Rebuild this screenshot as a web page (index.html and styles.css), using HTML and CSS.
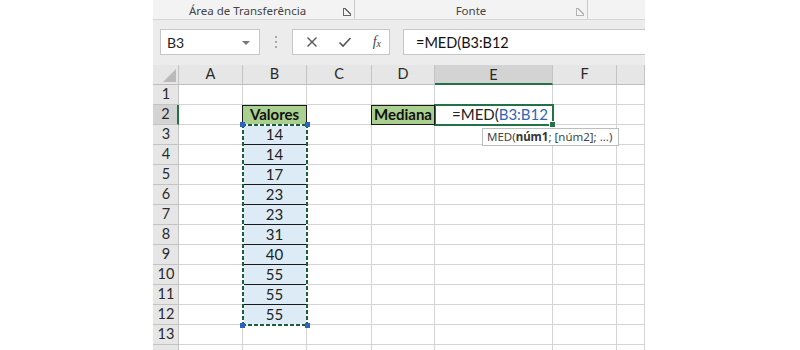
FILE: index.html
```html
<!DOCTYPE html>
<html lang="pt">
<head>
<meta charset="utf-8">
<title>MED</title>
<link rel="stylesheet" href="styles.css">
</head>
<body>
<div class="app">
  <div class="ribbon">
    <div class="group g1"><span class="glabel">Área de Transferência</span><span class="launcher"></span></div>
    <div class="group g2"><span class="glabel">Fonte</span><span class="launcher dim"></span></div>
    <div class="group g3"></div>
  </div>
  <div class="fbar">
    <div class="namebox"><span>B3</span><span class="caret"></span></div>
    <div class="vdots"><i></i><i></i><i></i></div>
    <div class="btns">
      <svg class="ico" width="12" height="12" viewBox="0 0 12 12"><path d="M1.5 1.5 L10.5 10.5 M10.5 1.5 L1.5 10.5" stroke="#555" stroke-width="1.4" fill="none"/></svg>
      <svg class="ico" width="14" height="12" viewBox="0 0 14 12"><path d="M1.5 6.5 L5 10 L12.5 2" stroke="#555" stroke-width="1.6" fill="none"/></svg>
      <span class="fx">f<sub>x</sub></span>
    </div>
    <div class="finput">=MED(B3:B12</div>
  </div>
  <div class="sheet">
    <div class="c h corner"><span class="tri"></span></div>
    <div class="c h">A</div><div class="c h">B</div><div class="c h">C</div><div class="c h">D</div><div class="c h hsel">E</div><div class="c h">F</div><div class="c h"></div>

    <div class="c rh">1</div><div class="c"></div><div class="c"></div><div class="c"></div><div class="c"></div><div class="c"></div><div class="c"></div><div class="c"></div>

    <div class="c rh rsel">2</div><div class="c"></div><div class="c green">Valores</div><div class="c"></div><div class="c green">Mediana</div><div class="c active"><span class="ftext">=MED(<span class="ref">B3:B12</span></span><span class="fill"></span></div><div class="c"></div><div class="c"></div>

    <div class="c rh">3</div><div class="c"></div><div class="c v">14</div><div class="c"></div><div class="c"></div><div class="c"></div><div class="c"></div><div class="c"></div>
    <div class="c rh">4</div><div class="c"></div><div class="c v">14</div><div class="c"></div><div class="c"></div><div class="c"></div><div class="c"></div><div class="c"></div>
    <div class="c rh">5</div><div class="c"></div><div class="c v">17</div><div class="c"></div><div class="c"></div><div class="c"></div><div class="c"></div><div class="c"></div>
    <div class="c rh">6</div><div class="c"></div><div class="c v">23</div><div class="c"></div><div class="c"></div><div class="c"></div><div class="c"></div><div class="c"></div>
    <div class="c rh">7</div><div class="c"></div><div class="c v">23</div><div class="c"></div><div class="c"></div><div class="c"></div><div class="c"></div><div class="c"></div>
    <div class="c rh">8</div><div class="c"></div><div class="c v">31</div><div class="c"></div><div class="c"></div><div class="c"></div><div class="c"></div><div class="c"></div>
    <div class="c rh">9</div><div class="c"></div><div class="c v">40</div><div class="c"></div><div class="c"></div><div class="c"></div><div class="c"></div><div class="c"></div>
    <div class="c rh">10</div><div class="c"></div><div class="c v">55</div><div class="c"></div><div class="c"></div><div class="c"></div><div class="c"></div><div class="c"></div>
    <div class="c rh">11</div><div class="c"></div><div class="c v">55</div><div class="c"></div><div class="c"></div><div class="c"></div><div class="c"></div><div class="c"></div>
    <div class="c rh">12</div><div class="c"></div><div class="c v">55</div><div class="c"></div><div class="c"></div><div class="c"></div><div class="c"></div><div class="c"></div>
    <div class="c rh">13</div><div class="c"></div><div class="c"></div><div class="c"></div><div class="c"></div><div class="c"></div><div class="c"></div><div class="c"></div>
    <div class="c rh"></div><div class="c"></div><div class="c"></div><div class="c"></div><div class="c"></div><div class="c"></div><div class="c"></div><div class="c"></div>

    <div class="marquee"><span class="hd tl"></span><span class="hd tr"></span><span class="hd bl"></span><span class="hd br"></span></div>
    <div class="tip">MED(<b>núm1</b>; [núm2]; ...)</div>
  </div>
</div>
</body>
</html>
```

FILE: styles.css
```css
* { box-sizing: border-box; }
html, body { margin: 0; padding: 0; background: #fff; }
body { width: 800px; height: 350px; overflow: hidden; }

.app {
  margin-left: 153px;
  width: 492px;
  height: 350px;
  overflow: hidden;
  background: #e9e9e9;
  font-family: Lato, "Liberation Sans", sans-serif;
}

/* ribbon */
.ribbon {
  display: flex;
  height: 20px;
  background: #f3f3f3;
  border-bottom: 1px solid #d6d6d6;
  font-family: "Noto Sans", "Open Sans", sans-serif;
  font-size: 11.5px;
  color: #444;
}
.group {
  position: relative;
  display: flex;
  align-items: flex-end;
  justify-content: center;
  height: 19px;
  border-right: 1px solid #c9c9c9;
}
.g1 { width: 202px; padding-right: 12px; }
.g2 { width: 233px; }
.g3 { flex: 1; border-right: none; }
.glabel { line-height: 16px; padding-bottom: 0; }
.launcher {
  position: absolute;
  right: 3px;
  top: 8px;
  width: 8px;
  height: 8px;
  border-left: 1px solid #666;
  border-bottom: 1px solid #666;
  background: linear-gradient(45deg, transparent 45%, #666 45%, #666 58%, transparent 58%);
}
.launcher.dim { opacity: .45; }

/* formula bar */
.fbar {
  display: flex;
  align-items: stretch;
  height: 45px;
  padding: 9px 0 10px 7px;
  background: #ececec;
}
.namebox {
  position: relative;
  width: 100px;
  background: #fff;
  border: 1px solid #c6c6c6;
  font-size: 14px;
  color: #222;
  padding-left: 6px;
  display: flex;
  align-items: center;
}
.caret {
  position: absolute;
  right: 9px;
  top: 11px;
  width: 0;
  height: 0;
  border-left: 4px solid transparent;
  border-right: 4px solid transparent;
  border-top: 4px solid #777;
}
.vdots {
  width: 32px;
  display: flex;
  flex-direction: column;
  align-items: center;
  justify-content: center;
  gap: 3px;
}
.vdots i { width: 2px; height: 2px; background: #a8a8a8; display: block; }
.btns {
  width: 98px;
  background: #fff;
  border: 1px solid #c6c6c6;
  display: flex;
  align-items: center;
  justify-content: space-between;
  padding: 0 8px 0 13px;
}
.fx {
  font-family: "Liberation Serif", "DejaVu Serif", serif;
  font-style: italic;
  font-size: 14px;
  color: #444;
  line-height: 1;
}
.fx sub { font-size: 10px; vertical-align: -1px; }
.finput {
  flex: 1;
  margin-left: 13px;
  background: #fff;
  border: 1px solid #c6c6c6;
  border-right: none;
  font-size: 14.5px;
  color: #111;
  padding-left: 12px;
  display: flex;
  align-items: center;
}

/* sheet */
.sheet {
  position: relative;
  display: grid;
  grid-template-columns: 26px 64px 64px 65px 63px 118px 64px 28px;
  grid-auto-rows: 20px;
  background: #fff;
  font-size: 15px;
  color: #222;
}
.c {
  border-right: 1px solid #d4d4d4;
  border-bottom: 1px solid #d4d4d4;
  display: flex;
  align-items: center;
  justify-content: center;
  white-space: nowrap;
  line-height: 1;
}
.h, .rh {
  background: #e6e6e6;
  color: #2a2a2a;
  border-color: #c3c3c3;
  font-size: 14.5px;
}
.h { border-bottom-color: #bdbdbd; }
.rh { justify-content: center; padding-left: 1px; }
.corner { position: relative; }
.tri {
  position: absolute;
  right: 2px;
  bottom: 2px;
  width: 13px;
  height: 13px;
  background: #bababa;
  clip-path: polygon(100% 0, 100% 100%, 0 100%);
}
.hsel {
  background: #d3d3d3;
  border-bottom: 2px solid #217346;
  padding-top: 2px;
}
.rsel {
  background: #d3d3d3;
  border-right: 2px solid #217346;
}

.green {
  position: relative;
  z-index: 1;
  background: #a9d08e;
  font-weight: bold;
  color: #111;
  outline: 1px solid #1a1a1a;
  outline-offset: -1px;
  margin-left: -1px;
  padding-left: 1px;
}
.v {
  background: #ddebf7;
  border-bottom-color: #1a1a1a;
}

.active {
  position: relative;
  justify-content: flex-start;
  padding-left: 17px;
}
.active::after {
  content: "";
  position: absolute;
  left: -1px;
  top: -1px;
  right: -2px;
  bottom: -2px;
  border: 2px solid #217346;
  pointer-events: none;
}
.ref { color: #2e66b8; }
.fill {
  position: absolute;
  right: -4px;
  bottom: -4px;
  width: 5px;
  height: 5px;
  background: #217346;
  border: 1px solid #fff;
  z-index: 2;
  box-sizing: content-box;
}

/* copy marquee over B3:B12 */
.marquee {
  position: absolute;
  left: 89px;
  top: 59px;
  width: 66px;
  height: 202px;
  z-index: 3;
  background:
    repeating-linear-gradient(90deg, #1c5e3a 0 4px, #fff 4px 6px) top left / 100% 2px no-repeat,
    repeating-linear-gradient(90deg, #1c5e3a 0 4px, #fff 4px 6px) bottom left / 100% 2px no-repeat,
    repeating-linear-gradient(180deg, #1c5e3a 0 4px, #fff 4px 6px) top left / 2px 100% no-repeat,
    repeating-linear-gradient(180deg, #1c5e3a 0 4px, #fff 4px 6px) top right / 2px 100% no-repeat;
}
.hd {
  position: absolute;
  width: 5px;
  height: 5px;
  background: #2b63c4;
}
.tl { left: -2px; top: -2px; }
.tr { right: -2px; top: -2px; }
.bl { left: -2px; bottom: -2px; }
.br { right: -2px; bottom: -2px; }

.tip {
  position: absolute;
  left: 329px;
  top: 63px;
  width: 137px;
  height: 18px;
  z-index: 4;
  background: #fff;
  border: 1px solid #bdbdbd;
  font-family: "Noto Sans", "Open Sans", sans-serif;
  font-size: 11.5px;
  color: #444;
  line-height: 16px;
  padding-left: 4px;
  white-space: nowrap;
}
.tip b { color: #333; }
```
